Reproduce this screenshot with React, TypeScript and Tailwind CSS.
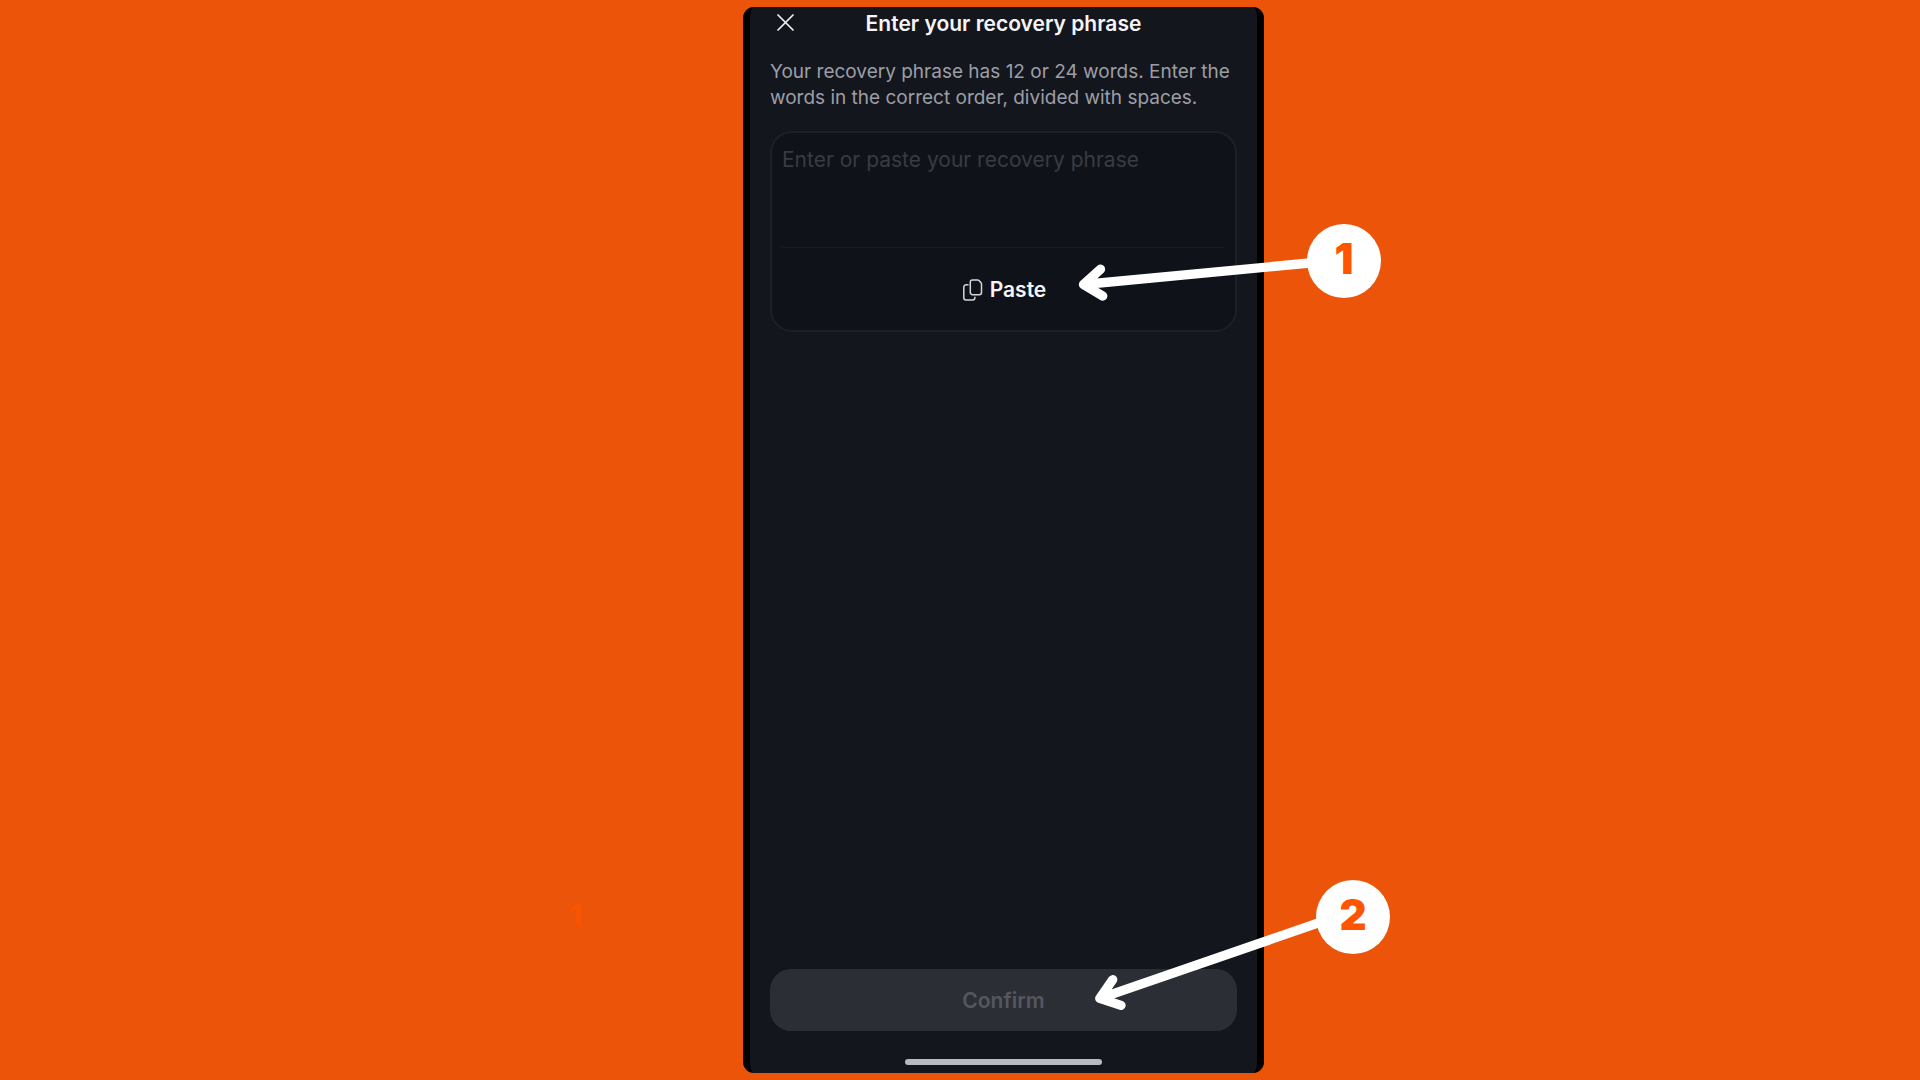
import React from "react";

function CloseIcon() {
  return (
    <svg width="18" height="18" viewBox="0 0 18 18" fill="none" stroke="#f1f1f3" strokeWidth="1.7" strokeLinecap="round" aria-hidden="true">
      <path d="M1 1 16 16M16 1 1 16" />
    </svg>
  );
}

function PasteIcon() {
  return (
    <svg width="20" height="22" viewBox="0 0 20 22" fill="none" stroke="#d5d6da" strokeWidth="1.5" strokeLinecap="round" strokeLinejoin="round" aria-hidden="true">
      <path d="M9.5 .9h5.1a2 2 0 0 1 1.4 .6l2 2.2a2 2 0 0 1 .5 1.300v8.500a2.200 2.200 0 0 1-2.200 2.200H9.500a2.200 2.200 0 0 1-2.200-2.200V3.100A2.200 2.200 0 0 1 9.500 .9Z" />
      <path d="M5 5.800H3a2.200 2.200 0 0 0-2.200 2.200v10.700a2.200 2.200 0 0 0 2.200 2.200h6.700a2.200 2.200 0 0 0 2.200-2.200V18.200" />
    </svg>
  );
}

function Badge({ children, className }: { children: React.ReactNode; className: string }) {
  return (
    <span
      className={`absolute flex size-[74px] items-center justify-center rounded-full bg-white pb-1 text-[42px] leading-none font-black text-[#ff5500] ${className}`}
    >
      {children}
    </span>
  );
}

export default function App() {
  return (
    <main className="relative flex min-h-screen justify-center overflow-hidden bg-[#ec5409] py-[7px] pl-[87px] font-['Inter',sans-serif]">
      <span className="absolute bottom-[151px] left-[570px] text-[27px] leading-none font-black text-[#f85402]">1</span>

      <div className="relative flex w-[521px]">
        <section className="flex flex-1 flex-col rounded-[11px] border-x-[7px] border-black bg-[#14161e] px-5 pb-2">
          <header className="grid h-8 grid-cols-[32px_1fr_32px] items-center">
            <button type="button" aria-label="Close" className="flex size-8 items-center justify-center">
              <CloseIcon />
            </button>
            <h1 className="pt-0.5 text-center text-[21px] leading-7 font-semibold whitespace-nowrap text-[#f5f5f7]">
              Enter your recovery phrase
            </h1>
          </header>

          <label htmlFor="phrase" className="mt-5 block text-[19px] leading-[26px] text-[#9c9ea6]">
            Your recovery phrase has 12 or 24 words. Enter the
            <br />
            words in the correct order, divided with spaces.
          </label>

          <div className="mt-5 flex flex-col rounded-[22px] border-2 border-[#1e2028] bg-[#10121a] px-[10px]">
            <textarea
              id="phrase"
              placeholder="Enter or paste your recovery phrase"
              className="block h-[114px] resize-none bg-transparent pt-3 text-[21px] leading-[30px] text-white outline-none placeholder:text-[#393b43]"
            />
            <div className="h-px bg-[#191b23]" />
            <button type="button" className="flex h-[82px] items-center justify-center gap-[7px] pt-0.5 pl-0.5 text-[21px] leading-7 font-semibold text-[#f5f5f7]">
              <PasteIcon />
              Paste
            </button>
          </div>

          <button type="button" className="mt-auto h-[62px] shrink-0 rounded-[21px] bg-[#2c2e36] pt-0.5 text-[21px] leading-7 font-semibold text-[#55575f]">
            Confirm
          </button>
          <div className="mt-7 h-[6px] w-[197px] self-center rounded-full bg-[#b9babf]" />
        </section>

        <svg className="absolute top-[240px] left-[330px]" width="260" height="60" viewBox="1073 247 260 60" fill="none" stroke="white" strokeWidth="9.300" strokeLinecap="round" strokeLinejoin="round" aria-hidden="true">
          <path d="M1100.500 269.200 1083.500 284.500 1102.700 296M1083.500 284.500 1320 262" />
        </svg>
        <Badge className="top-[217px] left-[564px]">1</Badge>

        <svg className="absolute right-[-69px] bottom-[53px]" width="260" height="110" viewBox="1073 910 260 110" fill="none" stroke="white" strokeWidth="9.300" strokeLinecap="round" strokeLinejoin="round" aria-hidden="true">
          <path d="M1112.700 979.700 1099.800 998.400 1121 1005.300M1099.800 998.400 1325 920.700" />
        </svg>
        <Badge className="bottom-[119px] left-[573px]">2</Badge>
      </div>
    </main>
  );
}
